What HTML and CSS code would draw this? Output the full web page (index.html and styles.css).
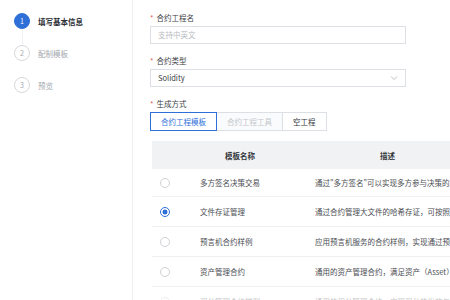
FILE: index.html
```html
<!DOCTYPE html>
<html lang="zh-CN">
<head>
    <meta charset="UTF-8">
    <title>新建合约工程</title>
    <link rel="stylesheet" href="styles.css">
</head>
<body>
    <div class="page">
        <div class="steps">
            <div class="step active">
                <span class="num">1</span>
                <span class="title">填写基本信息</span>
            </div>
            <div class="step">
                <span class="num">2</span>
                <span class="title">配制模板</span>
            </div>
            <div class="step">
                <span class="num">3</span>
                <span class="title">预览</span>
            </div>
        </div>

        <div class="form">
            <div class="field">
                <div class="label"><i>*</i>合约工程名</div>
                <div class="input placeholder">支持中英文</div>
            </div>
            <div class="field">
                <div class="label"><i>*</i>合约类型</div>
                <div class="input select">
                    <span>Solidity</span>
                    <svg width="8" height="6" viewBox="0 0 8 6"><path d="M1 1.5 L4 4.5 L7 1.5" fill="none" stroke="#b5b8bd" stroke-width="0.9"/></svg>
                </div>
            </div>
            <div class="field">
                <div class="label"><i>*</i>生成方式</div>
                <div class="tabs">
                    <span class="tab on">合约工程模板</span>
                    <span class="tab off">合约工程工具</span>
                    <span class="tab">空工程</span>
                </div>
            </div>

            <div class="table">
                <div class="row head">
                    <span class="c-radio"></span>
                    <span class="c-name">模板名称</span>
                    <span class="c-desc">描述</span>
                </div>
                <div class="row first">
                    <span class="c-radio"><b class="radio"></b></span>
                    <span class="c-name">多方签名决策交易</span>
                    <span class="c-desc">通过"多方签名"可以实现多方参与决策的场景</span>
                </div>
                <div class="row">
                    <span class="c-radio"><b class="radio checked"></b></span>
                    <span class="c-name">文件存证管理</span>
                    <span class="c-desc">通过合约管理大文件的哈希存证，可按照用户</span>
                </div>
                <div class="row">
                    <span class="c-radio"><b class="radio"></b></span>
                    <span class="c-name">预言机合约样例</span>
                    <span class="c-desc">应用预言机服务的合约样例，实现通过预言机</span>
                </div>
                <div class="row">
                    <span class="c-radio"><b class="radio"></b></span>
                    <span class="c-name">资产管理合约</span>
                    <span class="c-desc">通用的资产管理合约，满足资产（Asset）的</span>
                </div>
                <div class="row faded">
                    <span class="c-radio"><b class="radio"></b></span>
                    <span class="c-name">积分管理合约样例</span>
                    <span class="c-desc">通用的积分管理合约，实现积分的发放与转移等</span>
                </div>
            </div>
        </div>
    </div>
</body>
</html>
```

FILE: styles.css
```css
body {
    margin: 0;
    font-family: "Noto Sans CJK SC", "Noto Sans", sans-serif;
    font-size: 7.5px;
    color: #33363b;
    background: #fff;
    overflow: hidden;
}
.page {
    display: flex;
    height: 300px;
    overflow: hidden;
}
.steps {
    width: 133px;
    border-right: 1px solid #eceef1;
    padding-top: 5px;
    box-sizing: border-box;
    flex-shrink: 0;
}
.step {
    display: flex;
    align-items: center;
    height: 32px;
    padding-left: 14px;
    color: #a4a8ae;
    position: relative;
}
.step.active::after {
    content: "";
    position: absolute;
    left: 22px;
    top: 25px;
    height: 14px;
    border-left: 1px solid #eef0f2;
}
.step .num {
    width: 16px;
    height: 16px;
    border: 1px solid #d5d8dc;
    border-radius: 50%;
    box-sizing: border-box;
    display: flex;
    align-items: center;
    justify-content: center;
    font-size: 7px;
    color: #a4a8ae;
    margin-right: 8px;
}
.step.active {
    color: #2b2e33;
    font-weight: bold;
}
.step.active .num {
    background: #2f6fd8;
    border-color: #2f6fd8;
    color: #fff;
    font-weight: normal;
}
.form {
    flex: 1;
    padding: 11px 0 0 17px;
    min-width: 0;
    overflow: hidden;
}
.field {
    margin-bottom: 10px;
}
.label {
    height: 13px;
    line-height: 13px;
    margin-bottom: 2px;
    color: #3a3d42;
}
.label i {
    font-style: normal;
    color: #e05a4f;
    margin-right: 3px;
}
.input {
    width: 256px;
    height: 18px;
    border: 1px solid #dcdfe3;
    box-sizing: border-box;
    padding: 0 7px;
    line-height: 16px;
}
.placeholder {
    color: #b9bcc1;
}
.select {
    display: flex;
    justify-content: space-between;
    align-items: center;
    color: #3a3d42;
}
.tabs {
    display: flex;
}
.tab {
    height: 19px;
    line-height: 17px;
    box-sizing: border-box;
    border: 1px solid #dcdfe3;
    padding: 0 10px;
    margin-left: -1px;
}
.tab:first-child {
    margin-left: 0;
}
.tab.on {
    border-color: #2f6fd8;
    color: #2f6fd8;
    position: relative;
}
.tab.off {
    color: #c3c6cb;
    background: #fafbfc;
}
.table {
    margin-top: 10px;
    margin-left: 2px;
    width: 340px;
}
.row {
    display: flex;
    align-items: center;
    height: 30px;
    box-sizing: border-box;
    border-bottom: 1px solid #eef0f2;
    color: #4a4d52;
}
.row.head {
    height: 28px;
    background: #f1f2f4;
    border-bottom: none;
    color: #33363b;
    font-weight: bold;
}
.row.first {
    height: 28px;
}
.row.faded {
    opacity: 0.35;
}
.c-radio {
    width: 48px;
    padding-left: 8px;
    box-sizing: border-box;
    flex-shrink: 0;
}
.c-name {
    width: 115px;
    box-sizing: border-box;
    flex-shrink: 0;
}
.head .c-name {
    padding-left: 25px;
}
.c-desc {
    flex: 1;
    white-space: nowrap;
    overflow: hidden;
}
.head .c-desc {
    padding-left: 65px;
}
.radio {
    display: block;
    width: 10px;
    height: 10px;
    border: 1px solid #cfd2d6;
    border-radius: 50%;
    box-sizing: border-box;
}
.radio.checked {
    border-color: #2f6fd8;
    background: radial-gradient(circle, #2f6fd8 0 2.3px, #fff 2.7px);
}
```
